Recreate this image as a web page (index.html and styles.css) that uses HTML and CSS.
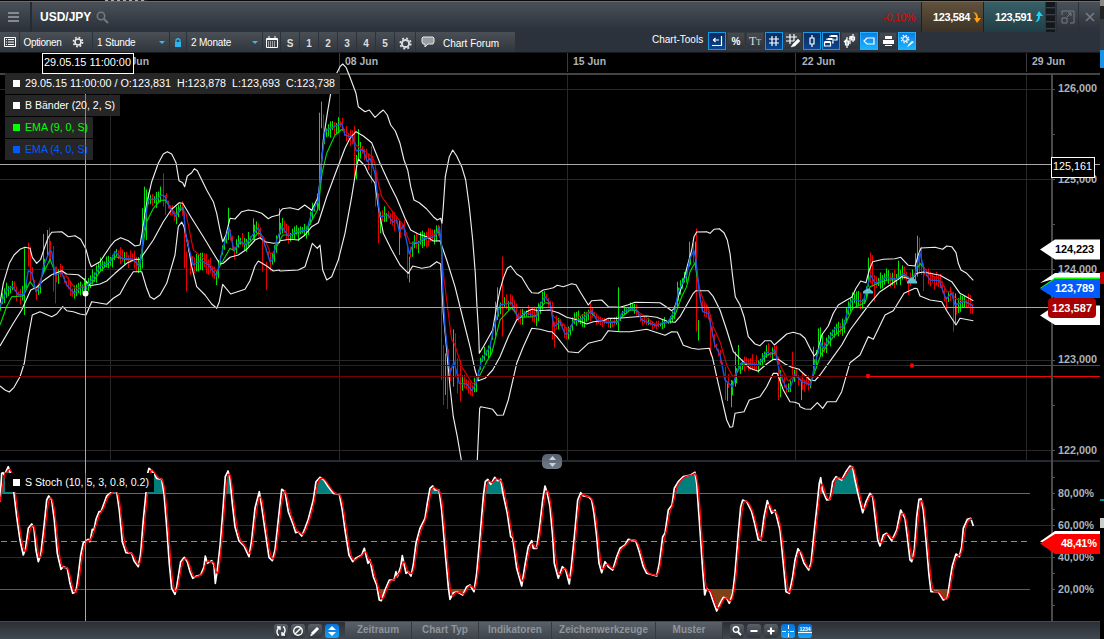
FILE: index.html
```html
<!DOCTYPE html>
<html lang="de">
<head>
<meta charset="utf-8">
<title>USD/JPY</title>
<link rel="stylesheet" href="styles.css">
</head>
<body>
<div class="screen">
<div class="window">
  <div class="backdrop"><i></i></div>
  <header class="titlebar">
    <div class="menu"><i></i><i></i><i></i></div>
    <h1>USD/JPY</h1>
    <svg class="search" width="13" height="13" viewBox="0 0 13 13"><circle cx="5" cy="5" r="3.7"/><path d="M8 8l4 4"/></svg>
    <span class="change">-0,10%</span>
    <div class="price sell"><b>123,584</b><svg width="9" height="12" viewBox="0 0 9 12"><path d="M1 1Q6 1 6 7H9L5 12 2 7H4Q4 3 1 1z" fill="#ffa012"/></svg></div>
    <div class="price buy"><b>123,591</b><svg width="9" height="12" viewBox="0 0 9 12"><path d="M1 11Q6 11 6 5H9L5 0 2 5H4Q4 9 1 11z" fill="#12d8ff"/></svg></div>
    <div class="grip"></div>
    <div class="win"><svg width="14" height="14" viewBox="0 0 14 14"><path d="M1 5V1h12v12H9M1 8h5v5H1zM6 7l4-4M7 3h3v3"/></svg></div>
    <div class="win"><svg width="10" height="10" viewBox="0 0 10 10"><path d="M1 1l8 8M9 1L1 9" stroke-width="1.6"/></svg></div>
  </header>
  <nav class="toolbar">
    <div class="btn w19"><svg width="12" height="10" viewBox="0 0 12 10"><path d="M.5.5h11v9H.5z" fill="none" stroke="#fff"/><path d="M2 2.5h1M4 2.5h6M2 5h1M4 5h6M2 7.500h1M4 7.500h6" stroke="#fff"/></svg></div>
    <div class="btn opt"><span>Optionen</span><svg width="12" height="12" viewBox="-6 -6 12 12"><circle r="3" fill="none" stroke="#eee" stroke-width="1.600"/><circle r="4.600" fill="none" stroke="#eee" stroke-width="1.600" stroke-dasharray="1.800 1.813"/></svg></div>
    <div class="btn drop hour"><span>1 Stunde</span><i></i></div>
    <div class="btn w16"><svg width="8" height="9" viewBox="0 0 8 9"><path d="M1 4h6v5H1z" fill="#2eb4f0"/><path d="M2 4V2q2-2.500 4 0v2" fill="none" stroke="#2eb4f0" stroke-width="1.300"/></svg></div>
    <div class="btn drop month"><span>2 Monate</span><i></i></div>
    <div class="btn w17"><svg width="12" height="12" viewBox="0 0 12 12"><path d="M.5 2.500h11v9H.5z" fill="none" stroke="#fff"/><path d="M1 3.500h10M3 0v3M9 0v3" stroke="#fff"/><path d="M2 6h8M2 8h8M2 10h8" stroke="#fff" stroke-dasharray="1 1"/></svg></div>
    <div class="btn num">S</div><div class="btn num">1</div><div class="btn num">2</div><div class="btn num">3</div><div class="btn num">4</div><div class="btn num">5</div>
    <div class="btn w20 gear"><svg width="13" height="13" viewBox="-6.500 -6.500 13 13"><circle r="3.600" fill="none" stroke="#d8dadd" stroke-width="2"/><circle r="5.300" fill="none" stroke="#d8dadd" stroke-width="1.600" stroke-dasharray="2.080 2.080"/></svg></div>
    <div class="btn forum"><svg width="14" height="12" viewBox="0 0 14 12"><path d="M2 1h10l1 1v4l-1 2H7l-3 3V8H2L1 6V2z" fill="#999da1" stroke="#e8e8e8"/></svg><span>Chart Forum</span></div>
    <span class="toolslabel">Chart-Tools</span>
    <div class="tools">
      <div class="tool on"><svg viewBox="0 0 16 16"><path d="M3 12.500h9.500V3M4 7h6M6.500 5L4.500 7l2 2"/></svg></div>
      <div class="tool"><b>%</b></div>
      <div class="tool"><em>T<small>T</small></em></div>
      <div class="tool on"><svg viewBox="0 0 16 16"><path d="M6 3v10M10 3v10M3 6h10M3 10h10"/></svg></div>
      <div class="tool"><svg viewBox="0 0 16 16"><path d="M5 1v10M9 1v7M1 4h11M1 8h8"/><path d="M6 14l2-3 5-5 2 2-5 5z" fill="#fff" stroke="#fff" stroke-width=".5"/></svg></div>
      <div class="tool on"><svg viewBox="0 0 16 16"><path d="M8 2v3M8 11v3M6 5h4v6H6z"/></svg></div>
      <div class="tool on"><svg viewBox="0 0 16 16"><path d="M1.500 9h6v4h-6zM4 7V6h6v4H9M7 4V3h7v4h-3"/><path d="M2 9h5M5 6h4M8 3h6" stroke-width="2"/></svg></div>
      <div class="tool"><svg viewBox="0 0 16 16"><path d="M5 4v11M2 9l3-3M3.500 8h3v4h-3zM8 3v8M7 6l3-3M11 1v8M9.500 4h3v3h-3z"/></svg></div>
      <div class="tool bright"><svg viewBox="0 0 16 16"><path d="M3 8l3-3h7v6H6z"/></svg></div>
      <div class="tool"><svg viewBox="0 0 16 16"><path d="M5 3h7v3H5zM3 7h11v4H3zM5 12h7v1H5z" fill="#fff" stroke="none"/></svg></div>
      <div class="tool bright"><svg viewBox="0 0 16 16"><circle cx="6" cy="6" r="2.300"/><circle cx="6" cy="6" r="3.800" stroke-dasharray="1.500 1.500"/><path d="M8 14l1.500-2.500L13 8l2 1-5 4z" fill="#fff" stroke="none"/></svg></div>
    </div>
  </nav>
  <svg class="chart" id="chart" width="1100" height="568" viewBox="0 53 1100 568">
    <defs>
      <clipPath id="price-area"><path d="M0 53H1052V460H0z"/></clipPath>
      <clipPath id="over"><path d="M0 463H1052V493H0z"/></clipPath>
      <clipPath id="under"><path d="M0 590H1052V621H0z"/></clipPath>
      <linearGradient id="knob" x2="0" y2="1"><stop stop-color="#56616d"/><stop offset="1" stop-color="#6f7c89"/></linearGradient>
    </defs>
    <g id="grid"></g>
    <g id="price" clip-path="url(#price-area)"></g>
    <g id="stoch"></g>
    <g id="overlay">
      <path class="dim" d="M0 365.500H912M0 376.500H868"/>
      <path class="alert" d="M912 365.500H1100M868 376.500H1100"/>
      <circle class="dot" cx="912" cy="365.500" r="2.200"/><circle class="dot" cx="868" cy="376" r="2.200"/>
      <path class="mark" d="M863 293.500v-2l4-3h2l4 3v2zM907 283.500v-2l4-4h2l4 4v2z"/>
      <path class="cross" d="M0 164.500H1100M0 307.500H1100M85.500 74V621"/>
      <circle cx="85.500" cy="293.500" r="3" fill="#fff"/>
    </g>
    <g class="legend">
      <path class="plate" d="M5 73H340V94H5zM5 95H120V116H5zM5 117H93V138H5zM5 139H93V160H5z"/>
      <path d="M5 473H154V492H5z"/>
      <path class="hair" d="M85.500 95V160M85.500 473V492"/>
      <g fill="#fff"><path d="M13 80h7v7h-7zM13 102h7v7h-7zM13 479h7v7h-7z"/>
      <text x="25" y="87" textLength="146" lengthAdjust="spacingAndGlyphs">29.05.15 11:00:00 / O:123,831</text>
      <text x="177" y="87" textLength="49" lengthAdjust="spacingAndGlyphs">H:123,878</text>
      <text x="232" y="87" textLength="48" lengthAdjust="spacingAndGlyphs">L:123,693</text>
      <text x="286" y="87" textLength="49" lengthAdjust="spacingAndGlyphs">C:123,738</text>
      <text x="25" y="109" textLength="90" lengthAdjust="spacingAndGlyphs">B Bänder (20, 2, S)</text>
      <text x="25" y="486" textLength="124" lengthAdjust="spacingAndGlyphs">S Stoch (10, 5, 3, 0.8, 0.2)</text></g>
      <g fill="#0f0"><path d="M13 124h7v7h-7z"/><text x="25" y="131" textLength="63" lengthAdjust="spacingAndGlyphs">EMA (9, 0, S)</text></g>
      <g fill="#005bff"><path d="M13 146h7v7h-7z"/><text x="25" y="153" textLength="63" lengthAdjust="spacingAndGlyphs">EMA (4, 0, S)</text></g>
    </g>
    <g class="axis" id="axis"></g>
    <g class="tags">
      <path fill="#fff" d="M1040 249.500L1055 239.500H1100V259.500H1055z"/>
      <text x="1055" y="253" fill="#000" textLength="39">124,223</text>
      <path fill="#fff" d="M1040 283L1055 273H1100V280H1050z"/>
      <path fill="#0f0" d="M1040 288L1055 277.500H1100V298H1055z"/>
      <path fill="#fff" d="M1040 315.500L1055 305.500H1100V325H1055z"/>
      <path fill="#005bff" d="M1040 289L1055 279H1100V298H1055z"/>
      <text x="1055" y="292" fill="#fff" textLength="39">123,789</text>
      <rect x="1048" y="298" width="48" height="20" rx="4" fill="#a80000"/>
      <text x="1052" y="312" fill="#fff" textLength="40">123,587</text>
      <path fill="#fff" d="M1040 541.500L1055 531H1100V545H1050z"/>
      <path fill="red" d="M1040 543.500L1055 534H1100V554H1055z"/>
      <text x="1061" y="547" fill="#fff" textLength="36">48,41%</text>
    </g>
    <g class="readout">
      <rect x="42.500" y="53.500" width="91" height="20"/><text x="44" y="66" textLength="87" lengthAdjust="spacingAndGlyphs">29.05.15 11:00:00</text>
      <rect x="1051.500" y="157.500" width="43" height="20"/><text x="1053" y="170" textLength="39" lengthAdjust="spacingAndGlyphs">125,161</text>
    </g>
    <rect x="542" y="454" width="20" height="15" rx="5" fill="url(#knob)"/>
    <path d="M549 460l3.500-4 3.500 4zM549 463l3.500 4 3.500-4z" fill="#c9d0d6"/>
  </svg>
  <footer class="footer">
    <div class="icons left">
      <div class="mini"><svg viewBox="0 0 14 14"><path d="M5 11H4Q1.500 7 5 3.500M9 3h1q2.500 4-1 7.500M3 3h3v3M11 11H8V8"/></svg></div>
      <div class="mini"><svg viewBox="0 0 14 14"><circle cx="7" cy="7" r="4.300"/><path d="M4 10l6-6"/></svg></div>
      <div class="mini"><svg viewBox="0 0 14 14"><path d="M4 10l6-6" stroke-width="3"/><path d="M2.500 11.500l2-1"/></svg></div>
      <div class="mini blue"><svg viewBox="0 0 14 14"><path d="M3 6l4-4 4 4zM3 8l4 4 4-4z" fill="#fff" stroke="none"/></svg></div>
    </div>
    <div class="tab" style="width:67px">Zeitraum</div><div class="tab" style="width:67px">Chart Typ</div><div class="tab" style="width:73px">Indikatoren</div><div class="tab" style="width:104px">Zeichenwerkzeuge</div><div class="tab" style="width:67px">Muster</div>
    <div class="icons right">
      <div class="mini"><svg viewBox="0 0 14 14"><circle cx="6" cy="5.500" r="2.800"/><path d="M8 8l3 3" stroke-width="2"/></svg></div>
      <div class="mini"><svg viewBox="0 0 14 14"><path d="M3.500 7h7" stroke-width="2"/></svg></div>
      <div class="mini"><svg viewBox="0 0 14 14"><path d="M3.500 7h7M7 3.500v7" stroke-width="2"/></svg></div>
      <div class="mini blue"><svg viewBox="0 0 14 14"><path d="M1 7.500h4M9 7.500h4M7.500 1v4M7.500 9v4M7 7.500h1" stroke-width="1"/></svg></div>
      <div class="mini blue"><svg viewBox="0 0 14 14"><text x="1.500" y="7" textLength="11">1234</text><path d="M0 8.500h14" stroke-width="1"/></svg></div>
    </div>
  </footer>
</div>
<aside class="neighbour"><i class="n1"></i><i class="n2"></i><i class="n3"></i><i class="n4"></i><i class="n5"></i><i class="n6"></i></aside>
</div>
<script src="chart.js"></script>
</body>
</html>
```
FILE: styles.css
```css
* { box-sizing: border-box; }
body { margin: 0; background: #000; font-family: "Liberation Sans", Arial, sans-serif; color: #fff; overflow: hidden; }
.screen { display: flex; width: 1104px; height: 639px; }
.window { width: 1100px; display: flex; flex-direction: column; }
.backdrop { height: 1px; background: #080808; padding-left: 105px; }
.backdrop i { display: block; width: 42px; height: 1px; background: repeating-linear-gradient(90deg, #aaa 0 3px, #222 3px 6px); }
.titlebar { height: 31px; display: flex; align-items: center; background: linear-gradient(#4b5058, #2c333c 90%); border-top: 1px solid #686d73; }
.menu { width: 32px; height: 30px; padding: 10px 11px 0 8px; border-right: 2px solid #252b33; }
.menu i { display: block; height: 2px; margin-bottom: 2px; background: #858a91; }
.titlebar h1 { margin: 0 0 0 8px; font-size: 12px; width: 56px; }
.search { fill: none; stroke: #747a82; stroke-width: 1.500; }
.search path { stroke-width: 2; }
.change { margin-left: auto; width: 38px; font-size: 11px; letter-spacing: -.5px; color: #e20000; }
.price { width: 62px; height: 30px; display: flex; align-items: center; padding-left: 11px; border-left: 1px solid #1d2127; gap: 2px; }
.price b { font-size: 11px; letter-spacing: -.4px; width: 37px; }
.sell { background: linear-gradient(#62523d, #3b3226); }
.buy { background: linear-gradient(#386068, #203d45); }
.grip { width: 11px; height: 30px; border: solid #30363d; border-width: 0 1px; background: repeating-linear-gradient(#14181d 0 5px, #3b4148 5px 6px, #20252c 6px 7px); }
.win { width: 22px; height: 30px; display: flex; align-items: center; justify-content: center; border-left: 1px solid #2b3038; }
.win svg { fill: none; stroke: #777c83; }
.toolbar { height: 21px; background: #2b323b; display: flex; font-size: 10px; border-bottom: 1px solid #15191e; }
.btn { height: 20px; margin-right: 1px; display: flex; align-items: center; justify-content: center; background: linear-gradient(#4a4f56, #30363d); flex: none; }
.btn span { white-space: nowrap; }
.w19 { width: 19px; } .w16 { width: 16px; } .w17 { width: 17px; } .w20 { width: 20px; }
.opt { width: 72px; gap: 8px; padding-right: 5px; letter-spacing: -.3px; }
.opt svg { margin-left: 2px; }
.drop { justify-content: space-between; padding: 0 4px; }
.drop span { letter-spacing: -.2px; }
.drop i { border: 3px solid transparent; border-top-color: #38b8f5; border-bottom: 0; }
.hour { width: 76px; } .month { width: 75px; }
.num { width: 18px; font-weight: bold; padding-top: 3px; color: #ddd; }
.gear { padding-top: 2px; }
.forum { width: 99px; gap: 8px; padding-right: 11px; }
.forum span { padding-top: 3px; }
.toolslabel { margin-left: auto; padding-top: 2px; width: 56px; }
.tools { display: flex; gap: 1px; margin-right: 184px; }
.tool { width: 18px; height: 18px; border: 1px solid #373c43; background: linear-gradient(#464b52, #2c3239); display: flex; align-items: center; justify-content: center; }
.tool svg { width: 16px; height: 16px; fill: none; stroke: #fff; stroke-width: 1.200; flex: none; }
.tool em { font: 12px "Liberation Serif", serif; color: #ddd; }
.tool small { font-size: 8px; }
.on { background: linear-gradient(#0c2a5c, #0a4590); border-color: #149be8; }
.bright { background: linear-gradient(#0d7ce6, #19b4ff); border-color: #23b2ff; }
.chart { display: block; background: #000; flex: none; }
.grid { stroke: #282828; fill: none; }
.up { stroke: #0f0; } .down { stroke: #f00; }
.bars { fill: none; opacity: .9; }
.line { fill: none; stroke-width: 1.150; stroke-linejoin: round; }
.dim { stroke: #790000; fill: none; } .alert { stroke: #f00; fill: none; } .dot { fill: #f00; }
.mark { fill: #62c3d0; }
.cross { stroke: #a8a8a8; fill: none; }
.plate { fill: #262626; } .hair { stroke: #858585; }
.legend { font-size: 10px; }
.axis { font-size: 10px; font-weight: bold; fill: #aab3be; }
.tags { font-size: 11px; font-weight: bold; }
.readout { font-size: 11px; }
.readout rect { fill: #000; stroke: #fff; } .readout text { fill: #fff; }
.footer { height: 18px; display: flex; background: linear-gradient(#2a3036, #42484f); border-top: 1px solid #454a50; }
.icons { display: flex; gap: 3px; padding-top: 2px; }
.left { padding-left: 274px; width: 345px; }
.right { padding-left: 7px; }
.mini { width: 14px; height: 14px; border-radius: 3px; background: linear-gradient(#5a6067, #30363c); }
.mini svg { display: block; width: 14px; height: 14px; fill: none; stroke: #fff; stroke-width: 1.400; }
.mini text { font-size: 5px; font-weight: bold; fill: #fff; stroke: none; }
.blue { background: linear-gradient(#0870d8, #12a6fa); }
.tab { height: 17px; text-align: center; font-size: 10px; line-height: 16px; font-weight: bold; color: #8d959e; background: linear-gradient(#596068, #3e444b); border-right: 1px solid #353a41; }
.neighbour { width: 4px; background: #000; display: flex; flex-direction: column; }
.neighbour i { display: block; width: 4px; height: 2px; flex: none; }
.neighbour .n1 { height: 19px; background: linear-gradient(#888 0 6px, #222 6px); }
.neighbour .n2 { height: 31px; background: #343a42; }
.neighbour .n3 { height: 18px; background: #1794e6; }
.neighbour .n4 { margin-top: 204px; height: 12px; background: #b00; }
.neighbour .n5 { margin-top: 215px; background: #088; }
.neighbour .n6 { margin-top: 17px; height: 10px; background: #ccc; }
```
FILE: chart.js
```js
// Series are stored in tiles: an origin followed by points in thirds of a pixel.
const tile = (ox, oy, text) => text.trim().split(/\s+/).map(p => {
  const [x, y] = p.split(',').map(Number);
  return [ox + x / 3, oy + y / 3];
});
const A = t => tile(0, 140, t), B = t => tile(270, 60, t), C = t => tile(540, 200, t), D = t => tile(780, 220, t);
const el = (parent, name, attrs, text) => {
  const n = document.createElementNS('http://www.w3.org/2000/svg', name);
  for (const k in attrs) n.setAttribute(k, attrs[k]);
  if (text) n.textContent = text;
  document.getElementById(parent).appendChild(n);
};
const path = pts => 'M' + pts.map(p => p[0].toFixed(1) + ' ' + p[1].toFixed(1)).join('L');
const line = (parent, pts, stroke, w) => el(parent, 'path', { d: path(pts), class: 'line', stroke, style: w ? 'stroke-width:' + w : '' });

const upper = [
  ...A('0,490 10,430 28,370 42,345 60,328 75,322 90,325 97,352 110,370 122,358 133,325 145,292 155,277 185,275 205,290 225,287 242,298 258,328 268,365 274,380 300,365 330,320 345,302 362,293 385,302 405,318 420,315 427,275 438,200 455,125 475,70 490,42 502,35 515,42 528,68 537,122 548,128 554,140 562,108 575,98 583,86 592,92 620,150 640,185 650,220 660,270 668,305 678,285 690,235 705,237 725,215 745,210 765,213 785,220 805,236 815,230 838,224'),
  ...B('30,455 38,446 60,443 85,449 104,435 125,451 145,410 152,340 160,240 172,160 182,100 200,40 210,20 218,12 228,22 240,52 258,100 265,140 285,155 298,150 315,172 328,160 340,150 352,165 362,195 376,213 390,250 402,300 413,330 422,380 432,420 448,428 470,447 490,470 502,480 512,475 516,490 520,440 526,350 538,290 548,270 560,288 575,320 587,360 598,440 608,540 616,640 621,740 626,820 628,880 640,860 668,810 678,750 690,690 700,655 712,625 722,618 740,642 755,652 775,685 785,698 805,700 820,690 838,686'),
  ...C('40,263 52,256 70,260 95,251 108,254 122,278 145,315 155,302 185,300 205,320 240,322 265,314 285,307 360,308 375,318 395,332 403,325 415,290 430,245 440,205 455,150 462,110 470,96 500,95 510,100 522,88 538,86 552,98 562,120 570,160 578,230 586,290 600,315 612,350 625,410 645,432 660,437 675,422 692,422 703,435 720,420 740,402 760,397 778,402'),
  ...D('60,342 75,355 90,385 103,408 113,395 125,345 145,318 160,280 175,255 200,240 215,232 228,205 242,183 258,188 268,150 278,125 310,118 345,116 362,112 385,136 405,138 415,105 423,84 465,82 488,88 500,78 515,80 528,98 535,130 543,150 560,160 580,181')];
const middle = [
  ...A('0,618 40,550 65,510 92,450 110,442 130,422 155,404 185,392 200,402 235,404 255,420 270,437 300,432 320,423 345,400 380,370 405,358 420,358 460,300 490,245 515,208 538,188 548,190 575,235 610,290 640,340 660,372 670,370 690,352 715,345 740,328 765,300 780,293 795,305 820,310 838,308'),
  ...B('30,542 60,538 85,540 105,525 125,500 145,488 170,410 200,330 225,265 240,235 258,215 280,228 305,248 330,310 360,375 380,415 405,475 422,510 445,522 470,530 490,543 510,542 530,600 555,680 580,780 600,860 615,930 625,962 645,955 668,930 690,890 715,830 740,780 770,755 785,748 805,752 838,750'),
  ...C('35,332 55,338 80,352 105,358 140,372 160,365 190,362 205,355 235,355 270,352 320,348 350,352 385,365 405,367 420,350 440,315 460,280 468,272 505,272 520,290 540,330 560,390 580,455 600,475 630,505 655,514 680,492 700,478 715,478 735,492 755,502 778,508'),
  ...D('60,451 75,465 90,480 105,482 120,465 160,410 185,375 210,330 240,290 270,250 300,215 330,195 365,170 395,178 410,160 430,156 480,166 515,185 540,220 580,242')];
const lower1 = [
  ...A('0,738 15,750 28,756 42,742 60,710 73,670 85,590 97,525 120,515 155,530 170,522 188,500 200,512 220,515 240,522 258,525 275,485 320,493 340,475 360,462 380,425 400,395 425,395 440,445 450,470 462,478 480,465 500,430 525,345 535,260 545,246 552,260 565,320 575,380 590,440 615,465 635,492 650,505 658,485 668,433 692,462 735,448 750,422 765,378 775,363 800,378 820,393 838,390'),
  ...B('30,633 85,630 105,620 118,580 127,550 142,565 150,555 158,630 170,660 185,650 205,600 225,520 245,410 258,330 265,297 285,318 295,340 315,370 325,440 340,520 365,570 390,615 415,640 428,618 455,625 480,620 500,605 512,612 520,760 530,870 540,980 550,1070 562,1130 574,1200')];
const lower2 = [
  ...B('622,1200 629,1045 632,1040 655,1045 668,1048 682,1066 700,1065 715,1020 740,910 760,860 785,805 810,808 838,815'),
  ...C('35,395 50,410 70,435 85,455 115,458 145,430 185,420 205,392 240,395 270,395 320,388 375,406 395,395 412,396 430,436 455,445 475,448 508,445 518,475 530,530 545,595 560,660 570,682 578,680 585,640 612,635 628,600 660,590 680,560 700,520 712,520 730,570 750,605 765,607 778,612'),
  ...D('60,560 75,567 92,568 112,548 128,565 142,545 168,545 185,515 198,470 210,428 240,405 265,350 280,358 315,285 340,272 372,220 405,205 412,206 420,228 450,240 485,245 500,272 528,315 540,295 580,302')];
const fast = [
  ...A('0,500 20,450 38,440 55,465 73,462 85,392 95,398 108,455 120,440 130,380 150,330 155,335 165,405 185,398 200,435 222,460 245,440 255,445 275,420 300,380 330,365 345,335 365,355 400,358 418,380 425,340 430,280 445,178 470,178 485,165 495,170 510,205 528,230 540,203 550,203 558,290 580,375 605,362 625,375 650,408 665,340 687,262 702,332 720,302 735,315 775,263 790,300 808,358'),
  ...B('0,605 8,600 20,540 36,500 55,528 80,515 110,510 125,460 145,420 155,300 165,215 180,205 215,190 225,225 248,232 258,272 280,270 292,305 300,295 315,340 330,470 355,465 368,487 380,480 388,515 400,495 418,582 432,545 445,550 460,535 495,530 508,500 515,560 518,680 525,800 540,940 552,905 568,970 590,972 605,992 618,970 635,900 660,860 670,810 690,735 725,728 745,775 765,758 800,770 808,740'),
  ...C('0,315 15,290 30,310 42,380 60,365 75,402 85,400 100,365 130,355 155,332 170,360 205,368 235,365 245,340 270,325 290,330 305,360 350,378 365,370 385,365 405,330 415,275 430,245 440,225 450,175 462,152 468,180 478,280 488,335 505,340 515,390 525,435 540,465 555,540 578,560 590,515 605,488 655,495 680,455 690,462 705,450 719,518'),
  ...D('0,460 20,508 30,505 45,462 65,485 92,495 105,430 122,368 130,385 165,325 190,320 210,250 218,238 250,245 262,200 272,165 285,190 320,172 350,178 370,160 392,178 405,165 420,98 432,150 450,180 478,182 498,238 515,220 525,255 555,243 580,260')];
const slow = [
  ...A('0,555 20,500 35,470 70,468 90,425 108,450 130,400 150,358 165,395 190,395 225,445 255,438 275,430 300,395 345,350 365,355 395,360 420,372 430,310 440,245 460,205 480,182 495,180 530,225 545,205 558,220 580,330 610,355 650,395 690,325 702,332 720,308 745,312 775,278 790,290 808,330'),
  ...B('0,580 8,580 20,560 38,525 60,525 110,510 145,445 155,345 170,280 195,225 215,208 250,230 258,255 300,285 312,300 325,370 335,410 375,465 400,495 420,550 440,550 470,535 508,515 512,540 520,640 535,760 545,840 553,850 575,920 608,972 620,965 650,905 665,880 690,780 725,742 745,772 795,770 808,745'),
  ...C('0,325 15,308 30,310 40,350 60,362 82,388 90,385 105,355 150,335 165,350 190,360 230,368 240,355 270,330 290,332 350,375 365,372 385,365 405,345 425,290 440,260 450,215 465,188 470,225 480,270 490,300 505,325 520,380 540,425 560,495 578,530 590,520 605,490 625,495 655,495 680,465 708,458 719,490'),
  ...D('0,435 25,485 45,465 65,480 92,490 122,405 160,350 190,325 218,265 255,248 270,200 320,180 350,180 370,165 395,180 420,130 425,135 450,165 478,175 500,215 515,215 525,235 580,255')];

const at = (pts, x) => {
  for (let i = 1; i < pts.length; i++) if (pts[i][0] >= x) {
    const [a, b] = [pts[i - 1], pts[i]];
    return a[1] + (b[1] - a[1]) * Math.max(0, Math.min(1, (x - a[0]) / (b[0] - a[0] || 1)));
  }
  return pts[pts.length - 1][1];
};

// Grid
el('grid', 'path', { class: 'grid', d: 'M110.500 74V460M339.500 74V460M567.500 74V460M795.500 74V460M1026.500 74V460M0 89.500H1052M0 179.500H1052M0 269.500H1052M0 360.500H1052M0 450.500H1052M0 525.500H1052M0 557.500H1052' });
el('grid', 'path', { d: 'M0 74H1100', stroke: '#444', 'stroke-width': 2 });
el('grid', 'path', { d: 'M339.500 53V72M567.500 53V72M795.500 53V72M1026.500 53V72', stroke: '#3b3b3b' });
el('grid', 'path', { d: 'M0 461H1100', stroke: '#252a32', 'stroke-width': 2 });

// Hourly bars: "direction x top bottom" for the long ranges, the rest follow the fast average.
const spikes = [
  [0, 140, 'g73,325,525 r85,308,380 r91,320,430 g130,282,400 g142,270,350 r148,263,370 r160,318,455 r165,380,490 g427,205,385 g433,140,270 g440,148,300 r490,100,200 r496,165,225 r553,220,385 r560,335,455 r572,340,405 g685,203,300 g760,235,300 r787,295,395 r800,365,450'],
  [270, 60, 'g28,445,540 g142,400,450 g148,158,452 g154,125,205 r160,163,235 r254,198,355 g260,285,358 g266,207,300 r304,258,370 r316,330,440 r325,400,550 g331,455,520 g388,480,585 r412,560,655 g418,590,667 r515,490,960 r520,855,1035 g526,880,1005 r532,895,1047 g550,808,980 r556,820,950 r562,895,1000 r571,900,1025 g677,725,830 g683,682,780 r697,590,830'],
  [540, 200, 'g235,262,395 g413,245,320 g448,125,200 r460,130,190 g466,125,200 r470,85,395 g475,360,422 r36,305,420 r42,365,443 r512,345,465 r556,500,600 g562,550,603 g574,540,622 g586,455,560 g595,435,510 r715,470,600 g721,510,592'],
  [780, 220, 'r38,395,465 g64,480,540 g100,380,450 g115,325,400 g121,322,410 g127,340,410 g265,113,200 r271,98,190 r277,105,200 r283,165,245 g355,122,180 r385,170,225 g406,100,180 g412,47,170 r418,53,160 r424,80,165 r430,130,213 r520,215,335 g526,220,310']];
let up = '', down = '';
const used = new Set();
for (const [ox, oy, text] of spikes) for (const s of text.split(' ')) {
  const [x, y1, y2] = s.slice(1).split(',').map(Number);
  const px = Math.floor(ox + x / 3);
  const seg = `M${px + .5} ${oy + y1 / 3}V${oy + y2 / 3}`;
  used.add(px); used.add(px - 1);
  if (s[0] === 'g') up += seg; else down += seg;
}
let seed = 17;
const rnd = () => (seed = (seed * 16807) % 2147483647) / 2147483647;
for (let x = 0; x < 974; x += 2) {
  const a = rnd(), b = rnd(), c = rnd();
  if (used.has(x)) continue;
  const y = at(fast, x), slope = at(fast, x + 3) - at(fast, x - 3);
  const calm = x > 590 && x < 672 ? .6 : 1;
  const seg = `M${x + .5} ${y - (2 + a * 8) * calm}V${y + (2 + b * 8) * calm}`;
  if (slope + (c - .5) * 6 < 0) up += seg; else down += seg;
}
el('price', 'path', { d: up, class: 'bars up' });
el('price', 'path', { d: down, class: 'bars down' });

// Slow average: green while the fast one is above it, red otherwise.
let run = [], tone = null;
for (let x = 0; x <= 973; x++) {
  const y = at(slow, x), t = at(fast, x) <= y ? '#00d800' : '#e00000';
  run.push([x, y]);
  if (t !== tone && tone) { line('price', run, tone); run = [[x, y]]; }
  tone = t;
}
line('price', run, tone);
for (const b of [upper, middle, lower1, lower2]) line('price', b, '#eee');
line('price', fast, '#1558e8', 1.4);

// Stochastic
const k = [
  ...tile(0, 440, '0,185 5,100 9,98 13,105 25,80 35,110 42,160 50,230 60,300 70,345 76,330 85,265 95,252 102,265 108,330 115,365 122,345 132,260 140,180 146,168 155,180 163,240 172,340 183,388 190,380 202,385 210,430 218,460 228,455 235,405 242,345 250,308 265,298 270,305 277,268 282,270 288,238 297,215 303,215 320,168 330,160 340,150 350,155 358,210 367,305 378,338 395,340 402,362 415,380 422,340 430,240 438,160 443,100 447,85 455,92 465,105 470,115 485,118 492,160 500,260 508,370 515,445 525,463 530,440 542,365 553,352 562,365 570,395 578,415 590,408 602,405 612,380 616,348 622,370 635,362 642,375 646,430 652,390 660,320 668,220 676,110 684,93 690,115 697,190 705,260 717,303 732,318 747,350 755,300 765,205 778,155 785,200 795,270 807,352 817,362 825,330 835,240 845,148 855,155 865,215 880,255 887,278 895,275 905,288 915,265 925,238 940,180 948,125 960,112 972,120 985,140 1000,160 1018,162 1027,210 1035,270 1047,345 1058,365 1067,355 1085,345 1093,325 1104,370'),
  ...tile(370, 440, '0,360 10,410 20,435 28,480 34,482 45,450 58,420 72,420 78,395 82,410 92,380 97,347 108,400 115,395 123,408 130,375 138,310 150,265 165,235 172,190 180,145 188,138 195,150 207,150 215,210 225,330 235,440 240,478 250,458 262,455 278,465 290,440 300,435 312,455 320,400 330,290 340,170 346,125 353,118 362,133 374,112 383,122 392,118 400,165 412,220 422,290 428,295 440,385 455,438 465,375 475,320 485,302 490,325 500,325 510,250 518,180 525,138 532,160 540,200 548,290 553,370 565,415 577,380 587,390 598,432 605,370 615,270 623,180 632,158 640,168 655,170 665,180 672,220 680,290 687,370 695,398 705,365 715,380 728,390 740,350 750,325 765,315 775,298 797,302 808,335 820,380 830,400 860,408 868,370 878,290 885,280 895,210 906,195 913,145 925,125 940,110 962,105 975,97 980,130 988,240 998,390 1004,465 1010,445 1020,455 1030,485 1040,513 1050,490 1060,472 1070,475 1078,490'),
  ...tile(730, 440, '0,485 8,460 15,400 25,280 32,200 38,180 50,185 65,215 75,255 85,300 93,300 102,230 112,182 125,220 135,210 150,270 160,370 168,455 178,460 188,410 195,360 204,326 212,340 222,370 236,390 243,370 252,280 262,190 268,130 272,113 277,150 290,180 300,178 308,125 318,110 335,120 348,95 360,78 368,82 375,120 385,165 398,218 408,185 420,160 428,170 435,230 443,300 450,318 460,285 470,280 485,302 500,270 512,210 525,235 532,290 540,360 545,365 553,330 560,230 567,178 573,176 580,210 588,300 597,405 603,455 625,455 640,480 652,475 660,420 667,378 678,342 688,350 695,320 700,265 712,238 722,235 730,258')];
const d = [];
for (let x = 0; x <= 972; x++) d.push([x, (at(k, x - 3) + at(k, x - 1.500) + at(k, x)) / 3]);
const area = path([...d, [972, 541], [0, 541]]) + 'Z';
el('stoch', 'path', { d: area, fill: '#007f7c', 'clip-path': 'url(#over)' });
el('stoch', 'path', { d: area, fill: '#7e4015', 'clip-path': 'url(#under)' });
el('stoch', 'path', { d: 'M0 493.500H1030', stroke: '#138c8c' });
el('stoch', 'path', { d: 'M0 589.500H1030', stroke: '#875020' });
el('stoch', 'path', { d: 'M1 541.500H1030', stroke: '#8b8b8b', 'stroke-dasharray': '6 4' });
line('stoch', k, '#fff', 1.7);
line('stoch', d, '#f00', 1.4);

// Axes
el('axis', 'path', { d: 'M1052 74V621', stroke: '#4a4a4a', 'stroke-width': 2 });
let ticks = '';
for (const y of [89, 134, 179, 224, 269, 315, 360, 405, 450, 477, 493, 509, 525, 541, 557, 573, 589, 605]) ticks += `M1052 ${y + .5}h3`;
el('axis', 'path', { d: ticks, stroke: '#555' });
[['126,000', 92], ['125,000', 183], ['124,000', 273], ['123,000', 363], ['122,000', 454]].forEach(([t, y]) =>
  el('axis', 'text', { x: 1058, y, textLength: 39, lengthAdjust: 'spacingAndGlyphs' }, t));
[['80,00%', 497], ['60,00%', 529], ['40,00%', 561], ['20,00%', 593]].forEach(([t, y]) =>
  el('axis', 'text', { x: 1058, y, textLength: 36, lengthAdjust: 'spacingAndGlyphs' }, t));
[['01 Jun', 116], ['08 Jun', 345], ['15 Jun', 573], ['22 Jun', 802], ['29 Jun', 1032]].forEach(([t, x]) =>
  el('axis', 'text', { x, y: 65, textLength: 33, lengthAdjust: 'spacingAndGlyphs' }, t));
```
